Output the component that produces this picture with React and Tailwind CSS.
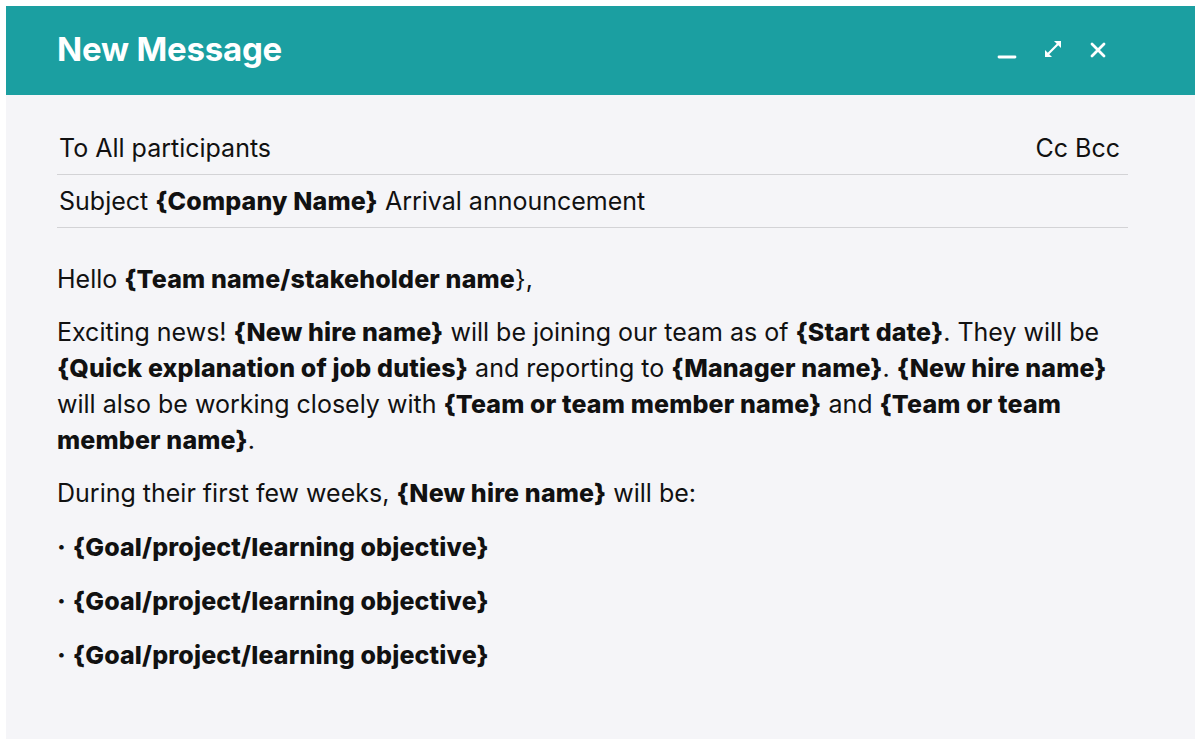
const Var = ({ children }) => <strong className="font-extrabold tracking-[0.15px]">{children}</strong>;

const Bullet = () => (
  <p className="mt-[18px]">
    <span className="font-extrabold">·</span> <Var>{"{Goal/project/learning objective}"}</Var>
  </p>
);

export default function App() {
  return (
    <div className="w-[1200px] h-[744px] bg-white p-[6px] pr-[5px] pb-[5px] font-['Inter',sans-serif] text-[#111]">
      <div className="h-full flex flex-col bg-[#f5f5f8]">
        <div className="h-[89px] shrink-0 bg-[#1b9fa1] flex items-center justify-between pl-[51px] pr-[88px]">
          <h1 className="text-[33px] font-bold text-white tracking-[-0.2px] -mt-[1px]">New Message</h1>
          <div className="flex items-center gap-[26px] text-white">
            <svg width="20" height="20" viewBox="0 0 20 20" className="mt-[3px]">
              <path d="M2 15h16" stroke="currentColor" strokeWidth="2.8" strokeLinecap="round" />
            </svg>
            <svg width="20" height="20" viewBox="0 0 20 20" className="-mt-[4px]">
              <path d="M3.5 16.5L16.5 3.5" stroke="currentColor" strokeWidth="2.2" strokeLinecap="round" />
              <path d="M11 2h7v7z" fill="currentColor" />
              <path d="M2 11v7h7z" fill="currentColor" />
            </svg>
            <svg width="18" height="18" viewBox="0 0 18 18" className="-mt-[1px]">
              <path d="M3 3l12 12M15 3L3 15" stroke="currentColor" strokeWidth="2.8" strokeLinecap="round" />
            </svg>
          </div>
        </div>

        <div className="pl-[51px] pr-[67px] text-[25px] leading-[36px]">
          <div className="flex justify-between items-end h-[80px] pb-[8px] border-b-[1.5px] border-[#d3d3d6] pl-[2px] pr-[8px]">
            <span>To All participants</span>
            <span>Cc Bcc</span>
          </div>
          <div className="flex items-center h-[53px] border-b-[1.5px] border-[#d3d3d6] pl-[2px]">
            <span>
              Subject <Var>{"{Company Name}"}</Var> Arrival announcement
            </span>
          </div>

          <div className="pt-[33px] -mr-[40px]">
            <p>
              Hello <Var>{"{Team name/stakeholder name"}</Var>{"},"}
            </p>
            <p className="mt-[17px]">
              Exciting news! <Var>{"{New hire name}"}</Var> will be joining our team as of{" "}
              <Var>{"{Start date}"}</Var>. They will be
              <br />
              <Var>{"{Quick explanation of job duties}"}</Var> and reporting to{" "}
              <Var>{"{Manager name}"}</Var>. <Var>{"{New hire name}"}</Var>
              <br />
              will also be working closely with <Var>{"{Team or team member name}"}</Var> and{" "}
              <Var>{"{Team or team"}</Var>
              <br />
              <Var>{"member name}"}</Var>.
            </p>
            <p className="mt-[17px]">
              During their first few weeks, <Var>{"{New hire name}"}</Var> will be:
            </p>
            <Bullet />
            <Bullet />
            <Bullet />
          </div>
        </div>
      </div>
    </div>
  );
}
